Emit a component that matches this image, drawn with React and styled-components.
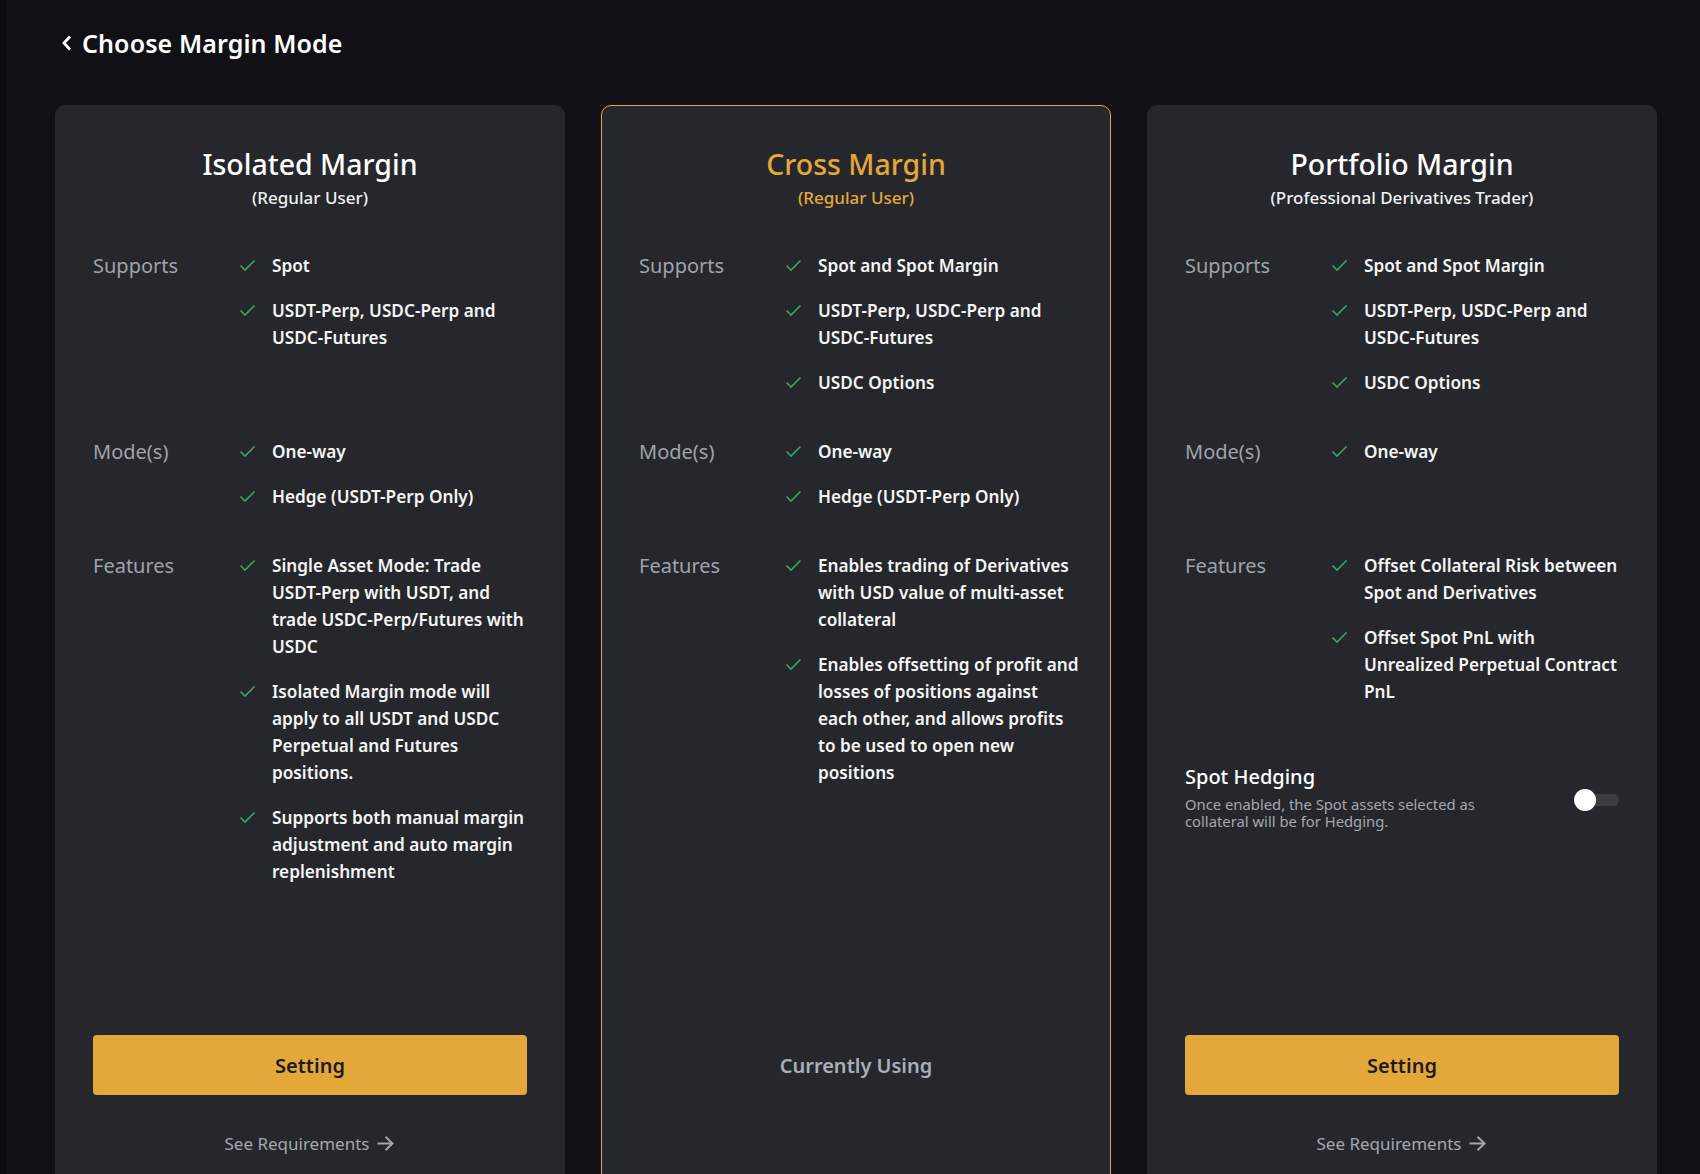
import React from "react";
import styled, { createGlobalStyle } from "styled-components";

const GlobalStyle = createGlobalStyle`
  html, body {
    margin: 0;
    padding: 0;
    background: #111115;
    height: 1174px;
    overflow: hidden;
  }
  body {
    font-family: "Noto Sans", "Liberation Sans", sans-serif;
    color: #f4f4f5;
  }
`;

const CARDS = [
  {
    id: "isolated",
    title: "Isolated Margin",
    subtitle: "(Regular User)",
    supports: [["Spot"], ["USDT-Perp, USDC-Perp and", "USDC-Futures"]],
    modes: [["One-way"], ["Hedge (USDT-Perp Only)"]],
    features: [
      ["Single Asset Mode: Trade", "USDT-Perp with USDT, and", "trade USDC-Perp/Futures with", "USDC"],
      ["Isolated Margin mode will", "apply to all USDT and USDC", "Perpetual and Futures", "positions."],
      ["Supports both manual margin", "adjustment and auto margin", "replenishment"],
    ],
  },
  {
    id: "cross",
    title: "Cross Margin",
    subtitle: "(Regular User)",
    active: true,
    supports: [["Spot and Spot Margin"], ["USDT-Perp, USDC-Perp and", "USDC-Futures"], ["USDC Options"]],
    modes: [["One-way"], ["Hedge (USDT-Perp Only)"]],
    features: [
      ["Enables trading of Derivatives", "with USD value of multi-asset", "collateral"],
      ["Enables offsetting of profit and", "losses of positions against", "each other, and allows profits", "to be used to open new", "positions"],
    ],
  },
  {
    id: "portfolio",
    title: "Portfolio Margin",
    subtitle: "(Professional Derivatives Trader)",
    hedging: true,
    supports: [["Spot and Spot Margin"], ["USDT-Perp, USDC-Perp and", "USDC-Futures"], ["USDC Options"]],
    modes: [["One-way"]],
    features: [
      ["Offset Collateral Risk between", "Spot and Derivatives"],
      ["Offset Spot PnL with", "Unrealized Perpetual Contract", "PnL"],
    ],
  },
];

const Check = () => (
  <svg width="17" height="13" viewBox="0 0 17 13" fill="none">
    <path d="M1.5 6.5L6 11L15.5 1.5" stroke="#3aa35f" strokeWidth="1.6" />
  </svg>
);

const ChevronLeft = () => (
  <svg width="14" height="20" viewBox="0 0 14 20" fill="none">
    <path d="M10 3.5L4 10L10 16.5" stroke="#ffffff" strokeWidth="2.8" />
  </svg>
);

const ArrowRight = () => (
  <svg width="19" height="17" viewBox="0 0 19 17" fill="none">
    <path d="M1.5 8.5H16.5M9.5 1.8L16.5 8.5L9.5 15.2" stroke="#a3a8b0" strokeWidth="1.9" />
  </svg>
);

const Section = ({ label, items, minHeight }) => (
  <Row minHeight={minHeight}>
    <Label>{label}</Label>
    <List>
      {items.map((lines, i) => (
        <Item key={i}>
          <CheckBox>
            <Check />
          </CheckBox>
          <ItemText>
            {lines.map((line) => (
              <Line key={line}>{line}</Line>
            ))}
          </ItemText>
        </Item>
      ))}
    </List>
  </Row>
);

const MarginCard = ({ card }) => {
  const { title, subtitle, active, supports, modes, features, hedging } = card;
  return (
    <Card active={active}>
      <CardHeader>
        <CardTitle active={active}>{title}</CardTitle>
        <CardSubTitle active={active}>{subtitle}</CardSubTitle>
      </CardHeader>
      <CardBody>
        <Section label="Supports" items={supports} minHeight="144px" />
        <Section label="Mode(s)" items={modes} minHeight="72px" />
        <Section label="Features" items={features} />
        {hedging && (
          <Hedging>
            <HedgingText>
              <HedgingTitle>Spot Hedging</HedgingTitle>
              <HedgingDesc>
                Once enabled, the Spot assets selected as
                <br />
                collateral will be for Hedging.
              </HedgingDesc>
            </HedgingText>
            <Toggle>
              <Knob />
            </Toggle>
          </Hedging>
        )}
      </CardBody>
      <CardFooter>
        {active ? <CurrentText>Currently Using</CurrentText> : <Button>Setting</Button>}
        <Requirements hidden={active}>
          See Requirements
          <ArrowRight />
        </Requirements>
      </CardFooter>
    </Card>
  );
};

const App = () => {
  return (
    <Page>
      <GlobalStyle />
      <EdgeStrip />
      <Main>
        <Header>
          <ChevronLeft />
          <PageTitle>Choose Margin Mode</PageTitle>
        </Header>
        <Cards>
          {CARDS.map((card) => (
            <MarginCard key={card.id} card={card} />
          ))}
        </Cards>
      </Main>
    </Page>
  );
};

export default App;

const Page = styled.div`
  display: flex;
  height: 1174px;
  overflow: hidden;
  background: #111115;
`;

const EdgeStrip = styled.div`
  width: 7px;
  flex-shrink: 0;
  background: #0b0b0e;
`;

const Main = styled.div`
  flex: 1;
  padding: 26px 36px 0 48px;
`;

const Header = styled.div`
  display: flex;
  align-items: center;
  gap: 8px;
  height: 34px;
  padding-left: 5px;
`;

const PageTitle = styled.h1`
  margin: 0;
  font-size: 25px;
  font-weight: 600;
  letter-spacing: 0.1px;
  color: #ffffff;
`;

const Cards = styled.div`
  display: grid;
  grid-template-columns: repeat(3, 510px);
  column-gap: 36px;
  margin-top: 45px;
`;

const Card = styled.div`
  display: flex;
  flex-direction: column;
  box-sizing: border-box;
  height: 1100px;
  padding: 40px 37px 49px;
  background: #26272c;
  border-radius: 10px;
  border: 1px solid ${({ active }) => (active ? "#e4a83a" : "transparent")};
`;

const CardHeader = styled.header`
  display: flex;
  flex-direction: column;
  align-items: center;
  margin-bottom: 41px;
`;

const CardTitle = styled.h2`
  margin: 0;
  font-size: 28.5px;
  line-height: 36px;
  font-weight: 500;
  color: ${({ active }) => (active ? "#e4a83a" : "#ffffff")};
`;

const CardSubTitle = styled.div`
  margin-top: 3px;
  font-size: 17px;
  line-height: 26px;
  font-weight: 500;
  color: ${({ active }) => (active ? "#e4a83a" : "#f0f0f0")};
`;

const CardBody = styled.div`
  display: flex;
  flex-direction: column;
  gap: 42px;
  flex: 1;
`;

const Row = styled.div`
  display: flex;
  min-height: ${({ minHeight }) => minHeight || "0"};
`;

const Label = styled.div`
  width: 146px;
  flex-shrink: 0;
  font-size: 20px;
  line-height: 27px;
  color: #9ea3ab;
`;

const List = styled.div`
  display: flex;
  flex-direction: column;
  gap: 18px;
`;

const Item = styled.div`
  display: flex;
  gap: 16px;
`;

const CheckBox = styled.span`
  display: flex;
  align-items: center;
  height: 27px;
`;

const ItemText = styled.div`
  font-size: 17.2px;
  line-height: 27px;
  font-weight: 600;
  color: #f5f5f5;
`;

const Line = styled.div`
  white-space: nowrap;
`;

const Hedging = styled.div`
  display: flex;
  align-items: center;
  justify-content: space-between;
  margin-top: 17px;
`;

const HedgingText = styled.div`
  display: flex;
  flex-direction: column;
  gap: 6px;
`;

const HedgingTitle = styled.div`
  font-size: 20px;
  line-height: 26px;
  font-weight: 500;
  color: #ffffff;
`;

const HedgingDesc = styled.div`
  font-size: 14.8px;
  line-height: 17px;
  color: #a3a8b0;
`;

const Toggle = styled.div`
  position: relative;
  width: 45px;
  height: 12px;
  margin-top: 6px;
  border-radius: 6px;
  background: #3c3d42;
`;

const Knob = styled.span`
  position: absolute;
  left: 0;
  top: -5px;
  width: 22px;
  height: 22px;
  border-radius: 50%;
  background: #ffffff;
`;

const CardFooter = styled.div`
  display: flex;
  flex-direction: column;
  align-items: center;
  gap: 36px;
`;

const Button = styled.button`
  width: 100%;
  height: 60px;
  border: none;
  border-radius: 4px;
  background: #e4a83a;
  color: #1b1b1f;
  font-family: inherit;
  font-size: 20px;
  font-weight: 600;
  cursor: pointer;
`;

const CurrentText = styled.div`
  display: flex;
  align-items: center;
  justify-content: center;
  height: 60px;
  font-size: 20px;
  font-weight: 600;
  color: #a6afba;
`;

const Requirements = styled.a`
  display: flex;
  align-items: center;
  gap: 7px;
  height: 24px;
  font-size: 17px;
  color: #a3a8b0;
  cursor: pointer;
  visibility: ${({ hidden }) => (hidden ? "hidden" : "visible")};
`;
